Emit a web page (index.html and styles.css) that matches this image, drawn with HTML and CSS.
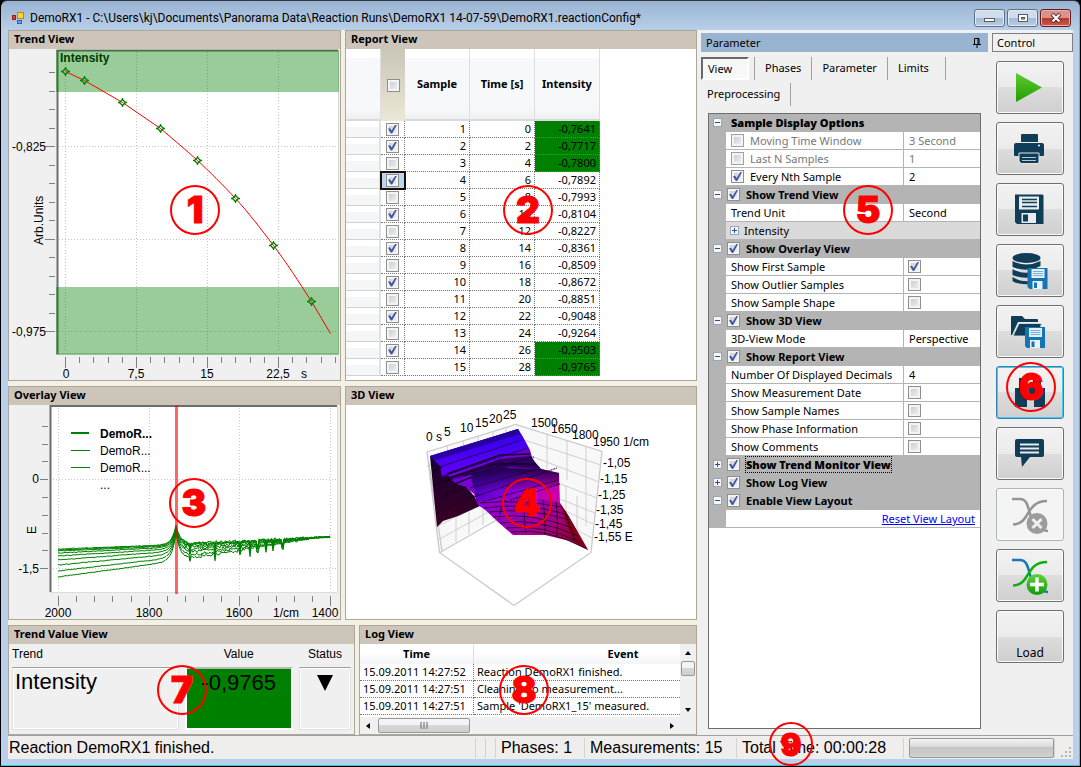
FILE: index.html
```html
<!DOCTYPE html>
<html lang="en">
<head>
<meta charset="utf-8">
<title>DemoRX1</title>
<link rel="stylesheet" href="styles.css">
</head>
<body>
<div class="window">
  <header class="titlebar">
    <svg class="app-icon" viewBox="11 11 14 14" width="14" height="14" aria-hidden="true">
      <rect x="17.5" y="12.5" width="6" height="6" fill="#ffd23c" stroke="#c08a00"/>
      <rect x="12.5" y="15.500" width="3" height="4" fill="#d8402a" stroke="#98200e"/>
      <rect x="17.500" y="20.500" width="4" height="3" fill="#6aa4f4" stroke="#2c62c8"/>
    </svg>
    <h1>DemoRX1 - C:\Users\kj\Documents\Panorama Data\Reaction Runs\DemoRX1 14-07-59\DemoRX1.reactionConfig*</h1>
    <div class="caption-buttons">
      <button class="cap" aria-label="Minimize"><svg viewBox="0 0 12 10" width="12" height="10"><rect x=".5" y="5.500" width="10" height="3" fill="#fff" stroke="#555c66"/></svg></button>
      <button class="cap" aria-label="Maximize"><svg viewBox="0 0 12 10" width="12" height="10"><rect x="1.500" y="1.500" width="9" height="7" fill="#fff" stroke="#555c66"/><rect x="4.500" y="4.500" width="3" height="1.500" fill="#8aa" stroke="#555c66"/></svg></button>
      <button class="cap close" aria-label="Close"><svg viewBox="0 0 12 10" width="12" height="10"><path d="M2 1l8 8M10 1L2 9" stroke="#5c2a26" stroke-width="4"/><path d="M2.500 1.500l7 7M9.500 1.500l-7 7" stroke="#fff" stroke-width="2.200"/></svg></button>
    </div>
  </header>

  <main class="workspace">
    <div class="views">
      <div class="view-row">
        <section class="panel">
          <h2>Trend View</h2>
          <svg class="chart" viewBox="9 49 331 331">
            <rect x="57" y="49" width="282" height="305" fill="#fff"/>
            <path d="M338.500 50V354M58 353.500H339" stroke="#d8d8d8" fill="none"/>
            <path d="M65.500 52V352M136.500 52V352M207.500 52V352M278.500 52V352M59 146.500H337M59 239.500H337M59 331.500H337" stroke="#c4c4c4" stroke-dasharray="1 2" fill="none"/>
            <path d="M57.500 354V50.500H338" stroke="#6c6c6c" stroke-width="2" fill="none"/>
            <path d="M56 50H339V92H56ZM56 287H339V355H56Z" fill="#008000" fill-opacity=".4"/>
            <path d="M49 72.500h6M49 91.500h6M49 109.500h6M49 128.500h6M45 146.500h10M49 165.500h6M49 183.500h6M49 202.500h6M49 220.500h6M45 239.500h10M49 257.500h6M49 276.500h6M49 294.500h6M49 313.500h6M45 331.500h10" stroke="#808080"/>
            <path d="M65.500 357v11M79.500 357v6M93.500 357v6M108.500 357v6M122.500 357v6M136.500 357v11M150.500 357v6M164.500 357v6M179.500 357v6M193.500 357v6M207.500 357v11M221.500 357v6M235.500 357v6M250.500 357v6M264.500 357v6M278.500 357v11M292.500 357v6M306.500 357v6M321.500 357v6M335.500 357v6" stroke="#808080"/>
            <path class="trend-line" d="M65.500 71.500L84.500 80.500 122.500 102.500 160.500 128.500C174 140 186 150 197.500 160.500S223 185 235.500 198.500 261 229 273.500 245.500 299 282 311.500 301.500L330.500 333.500"/>
            <g class="markers">
              <path d="M65.500 68.500l3 3-3 3-3-3zM84.500 77.500l3 3-3 3-3-3zM122.500 99.500l3 3-3 3-3-3zM160.500 125.500l3 3-3 3-3-3zM197.500 157.500l3 3-3 3-3-3zM235.500 195.500l3 3-3 3-3-3zM273.500 242.500l3 3-3 3-3-3zM311.500 298.500l3 3-3 3-3-3z"/>
              <path d="M65.500 67v2m0 5v2m-4.500 -4.500h2m5 0h2M84.500 76v2m0 5v2m-4.500 -4.500h2m5 0h2M122.500 98v2m0 5v2m-4.500 -4.500h2m5 0h2M160.500 124v2m0 5v2m-4.500 -4.500h2m5 0h2M197.500 156v2m0 5v2m-4.500 -4.500h2m5 0h2M235.500 194v2m0 5v2m-4.500 -4.500h2m5 0h2M273.500 241v2m0 5v2m-4.500 -4.500h2m5 0h2M311.500 297v2m0 5v2m-4.500 -4.500h2m5 0h2"/>
            </g>
            <text x="60" y="62" class="bold dark-green">Intensity</text>
            <text x="46" y="151" class="end">-0,825</text>
            <text x="46" y="336" class="end">-0,975</text>
            <text transform="translate(43 245) rotate(-90)">Arb.Units</text>
            <text x="66" y="378" class="mid">0</text><text x="136" y="378" class="mid">7,5</text><text x="207" y="378" class="mid">15</text><text x="278" y="378" class="mid">22,5</text><text x="301" y="378">s</text>
          </svg>
          <span class="callout c1">1</span>
        </section>

        <section class="panel">
          <h2>Report View</h2>
          <div class="report">
          <table>
            <thead><tr><th class="rowhead"></th><th class="check"><input type="checkbox" aria-label="Select all"></th><th>Sample</th><th>Time [s]</th><th>Intensity</th></tr></thead>
            <tbody>
            <tr><th></th><td class="check"><input type="checkbox" checked aria-label="Sample 1"></td><td>1</td><td>0</td><td class="hit">-0,7641</td></tr>
            <tr><th></th><td class="check"><input type="checkbox" checked aria-label="Sample 2"></td><td>2</td><td>2</td><td class="hit">-0,7717</td></tr>
            <tr><th></th><td class="check"><input type="checkbox" aria-label="Sample 3"></td><td>3</td><td>4</td><td class="hit">-0,7800</td></tr>
            <tr><th></th><td class="check current"><input type="checkbox" checked aria-label="Sample 4"></td><td>4</td><td>6</td><td>-0,7892</td></tr>
            <tr><th></th><td class="check"><input type="checkbox" aria-label="Sample 5"></td><td>5</td><td>8</td><td>-0,7993</td></tr>
            <tr><th></th><td class="check"><input type="checkbox" checked aria-label="Sample 6"></td><td>6</td><td>10</td><td>-0,8104</td></tr>
            <tr><th></th><td class="check"><input type="checkbox" aria-label="Sample 7"></td><td>7</td><td>12</td><td>-0,8227</td></tr>
            <tr><th></th><td class="check"><input type="checkbox" checked aria-label="Sample 8"></td><td>8</td><td>14</td><td>-0,8361</td></tr>
            <tr><th></th><td class="check"><input type="checkbox" aria-label="Sample 9"></td><td>9</td><td>16</td><td>-0,8509</td></tr>
            <tr><th></th><td class="check"><input type="checkbox" checked aria-label="Sample 10"></td><td>10</td><td>18</td><td>-0,8672</td></tr>
            <tr><th></th><td class="check"><input type="checkbox" aria-label="Sample 11"></td><td>11</td><td>20</td><td>-0,8851</td></tr>
            <tr><th></th><td class="check"><input type="checkbox" checked aria-label="Sample 12"></td><td>12</td><td>22</td><td>-0,9048</td></tr>
            <tr><th></th><td class="check"><input type="checkbox" aria-label="Sample 13"></td><td>13</td><td>24</td><td>-0,9264</td></tr>
            <tr><th></th><td class="check"><input type="checkbox" checked aria-label="Sample 14"></td><td>14</td><td>26</td><td class="hit">-0,9503</td></tr>
            <tr><th></th><td class="check"><input type="checkbox" aria-label="Sample 15"></td><td>15</td><td>28</td><td class="hit">-0,9765</td></tr>
            </tbody>
          </table>
          </div>
          <span class="callout c2">2</span>
        </section>
      </div>

      <div class="view-row">
        <section class="panel">
          <h2>Overlay View</h2>
          <svg class="chart" viewBox="9 405 331 214">
            <rect x="50" y="405" width="288" height="188" fill="#fff"/>
            <path d="M337.500 406V592.500H50" stroke="#dcdcdc" fill="none"/>
            <path d="M58.500 408V591M149.500 408V591M239.500 408V591M330.500 408V591M53 479.500H336M53 568.500H336" stroke="#c8c8c8" stroke-dasharray="1 2" fill="none"/>
            <path d="M50.500 592V406H337" stroke="#6c6c6c" stroke-width="2" fill="none"/>
            <path d="M42 426.500h6M42 444.500h6M42 461.500h6M40 479.500h8M42 497.500h6M42 515.500h6M42 533.500h6M42 550.500h6M40 568.500h8" stroke="#808080"/>
            <path d="M58.500 596v10M76.500 596v6M94.500 596v6M112.500 596v6M131.500 596v6M149.500 596v10M167.500 596v6M185.500 596v6M203.500 596v6M221.500 596v6M239.500 596v10M258.500 596v6M276.500 596v6M294.500 596v6M312.500 596v6M330.500 596v10" stroke="#808080"/>
            <g id="spectra"></g>
            <rect x="175" y="405" width="3" height="189" fill="#f00" fill-opacity=".6"/>
            <path d="M71 433h18" stroke="#008000" stroke-width="2"/>
            <path d="M71 450.500h19M71 467.500h19" stroke="#008000"/>
            <text x="100" y="438" class="bold">DemoR...</text><text x="100" y="455">DemoR...</text><text x="100" y="472">DemoR...</text><text x="100" y="489">...</text>
            <text x="39" y="483" class="end">0</text><text x="39" y="573" class="end">-1,5</text>
            <text transform="translate(36 534) rotate(-90)">E</text>
            <text x="58" y="617" class="mid">2000</text><text x="149" y="617" class="mid">1800</text><text x="239" y="617" class="mid">1600</text><text x="286" y="617" class="mid">1/cm</text><text x="325" y="617" class="mid">1400</text>
          </svg>
          <span class="callout c3">3</span>
        </section>

        <section class="panel">
          <h2>3D View</h2>
          <svg class="chart surface" viewBox="346 405 350 214">
            <defs>
              <linearGradient id="g-side" x1="0" y1="0" x2="0" y2="1"><stop offset="0" stop-color="#170030"/><stop offset="1" stop-color="#3c0024"/></linearGradient>
              <linearGradient id="g-ridge" x1="0" y1="0" x2=".25" y2="1"><stop offset="0" stop-color="#2400a0"/><stop offset=".4" stop-color="#3c00f0"/><stop offset="1" stop-color="#6a00f0"/></linearGradient>
              <linearGradient id="g-mid" x1="0" y1="0" x2="1" y2=".2"><stop offset="0" stop-color="#5a00e0"/><stop offset=".5" stop-color="#8400d8"/><stop offset="1" stop-color="#6000a8"/></linearGradient>
              <linearGradient id="g-hump" x1="0" y1=".3" x2="1" y2=".6"><stop offset="0" stop-color="#4200a4"/><stop offset=".35" stop-color="#7000d8"/><stop offset=".7" stop-color="#a400c8"/><stop offset="1" stop-color="#cc00a8"/></linearGradient>
              <linearGradient id="g-shade" x1="0" y1="0" x2="0" y2="1"><stop offset="0" stop-color="#100030" stop-opacity=".85"/><stop offset="1" stop-color="#100030" stop-opacity="0"/></linearGradient>
              <linearGradient id="g-front" x1="0" y1="0" x2="1" y2=".6"><stop offset="0" stop-color="#8c00dc"/><stop offset=".45" stop-color="#9800b4"/><stop offset=".75" stop-color="#a40078"/><stop offset="1" stop-color="#8c0020"/></linearGradient>
            </defs>
            <path d="M427 452L515.500 424.500 602 451.500 591 552.500 514 505 439.500 552.500Z" fill="#f8f8f8"/>
            <path d="M440 552.500L515 505 591 552.500 514 605.500Z" fill="#fff"/>
            <path d="M427 466L515 437 601 465M429 480L515 450 599 482M597 498L550 480M595 513L555 497M436 527L515 487 593 524M438 540L515 497 592 538M447 446l5 30M463 441l4 30M478 436v30M493 431v20M506 427v20M547 434v35M567 440v40M586 446v80M566 486V530M577 496V540M456 510v32M469 502v33M483 498v28M498 492v24" stroke="#d0d0d0" fill="none"/>
            <path d="M440 552.500L515 505 591 552.500 514 605.500Z" fill="#fff"/>
            <path d="M427 452L515.500 424.500 602 451.500 591 552.500 514 605.500 439.500 552.500ZM429 463l13 88M440 552.500L500 518" stroke="#cacaca" fill="none" stroke-width="1.300"/>
            <path d="M430 456L437 527 443 521 458 516 480 506 474 496 466 486 458 484 450 477 444 465Z" fill="url(#g-side)"/>
            <path d="M430 456L518 429 523 437 530 450 533 461 541 469 557 475 500 520 478 505 474 494 464 486 456 484 450 478 445 470 436 462Z" fill="url(#g-mid)"/>
            <path d="M430 456L518 429 523 438 529 449 442 477 440 466 434 460Z" fill="url(#g-ridge)"/>
            <path d="M430 456L518 429 520 434 433 461Z" fill="#200080" fill-opacity=".7"/>
            <path d="M446 478L500 459 531 456 535 462 541 469 510 467 470 475Z" fill="#300060"/>
            <path d="M450 478L494 464 536 464M447 474L500 455 530 454M455 484L474 476" stroke="#16002c" stroke-width="1.500" fill="none"/>
            <path d="M471 474L500 468 541 469 559 473 560 504 512 501 477 502Z" fill="url(#g-hump)"/>
            <path d="M471 474L500 468 541 469 559 473 559 486 472 492Z" fill="url(#g-shade)"/>
            <path d="M477 502L490 499 530 497 560 503 568 515 588 550 570 541 545 535 513 535 498 522Z" fill="url(#g-front)"/>
            <path d="M560 503L568 515 588 550 577 544 566 524Z" fill="#840018"/>
            <path d="M480 503Q520 499 562 507M484 508Q525 502 565 514M489 512Q528 507 569 520M493 517Q530 512 573 528M500 523Q536 517 578 536M506 528Q540 523 582 543M511 532Q545 527 585 548" stroke="#3c0044" stroke-width="1" fill="none"/>
            <path d="M436 468L522 440M440 477L527 448M446 481L534 457M470 488L537 469M474 497L557 468M482 502L558 480M510 500L560 484" stroke="#0c0030" stroke-dasharray="2 1" fill="none"/>
            <path d="M433 472L444 466M433 485L458 475M435 500L468 486M436 513L478 494" stroke="#08000c" stroke-dasharray="2 2" fill="none"/>
            <path d="M505 500q-5 8-6 20M525 499q-2 15 1 34M543 500q2 15 2 35M556 502q2 15 1 34M565 511q4 14 10 30" stroke="#14000c" stroke-dasharray="3 1" fill="none"/>
            <text x="426" y="441">0 s</text><text x="444" y="436">5</text><text x="460" y="432">10</text><text x="475" y="427">15</text><text x="489" y="423">20</text><text x="503" y="419">25</text>
            <text x="531" y="427">1500</text><text x="551" y="433">1650</text><text x="572" y="439">1800</text><text x="593" y="446">1950 1/cm</text>
            <text x="603" y="467">-1,05</text><text x="600" y="483">-1,15</text><text x="598" y="499">-1,25</text><text x="596" y="514">-1,35</text><text x="595" y="528">-1,45</text><text x="594" y="541">-1,55 E</text>
          </svg>
          <span class="callout c4">4</span>
        </section>
      </div>

      <div class="view-row lower">
        <section class="panel">
          <h2>Trend Value View</h2>
          <div class="trend-values">
            <span class="lbl">Trend</span><span class="lbl center">Value</span><span class="lbl center">Status</span>
            <div class="well">Intensity</div>
            <div class="well value">-0,9765</div>
            <div class="well status"><svg viewBox="0 0 16 16" width="16" height="16" role="img" aria-label="Falling"><path d="M0 0H16L8 16Z"/></svg></div>
          </div>
          <span class="callout c7">7</span>
        </section>
        <section class="panel">
          <h2>Log View</h2>
          <div class="log">
            <div class="log-scroll">
              <table>
                <thead><tr><th class="time">Time</th><th class="event">Event</th></tr></thead>
                <tbody>
                  <tr><td>15.09.2011 14:27:52</td><td>Reaction DemoRX1 finished.</td></tr>
                  <tr><td>15.09.2011 14:27:51</td><td>Cleaning no measurement...</td></tr>
                  <tr><td>15.09.2011 14:27:51</td><td>Sample 'DemoRX1_15' measured.</td></tr>
                </tbody>
              </table>
            </div>
            <div class="vbar"><svg viewBox="0 0 6 4" width="6" height="4"><path d="M3 0L6 4H0Z"/></svg><i class="thumb"></i><svg viewBox="0 0 6 4" width="6" height="4"><path d="M0 0H6L3 4Z"/></svg></div>
            <div class="hbar"><svg viewBox="0 0 4 6" width="4" height="6"><path d="M4 0V6L0 3Z"/></svg><i class="thumb"><svg viewBox="0 0 8 7" width="8" height="7"><path d="M1 0V7M4 0V7M7 0V7" stroke="#666"/></svg></i><svg class="right" viewBox="0 0 4 6" width="4" height="6"><path d="M0 0L4 3L0 6Z"/></svg></div>
          </div>
          <span class="callout c8">8</span>
        </section>
      </div>
    </div>

    <aside class="parameter">
      <h2 class="dock-title">Parameter
        <svg viewBox="0 0 8 10" width="8" height="10" aria-hidden="true"><path d="M1.500 6V.5H6V6M5 .5V6M0 6.500H8M4 7V10" fill="none" stroke="#000"/></svg>
      </h2>
      <nav class="tabs">
        <button class="active">View</button><button>Phases</button><button>Parameter</button><button class="wide">Limits</button><button>Preprocessing</button>
      </nav>
      <div class="props">
        <div class="cat"><button class="tog" aria-label="Collapse"></button><b>Sample Display Options</b></div>
        <div class="row off"><label><input type="checkbox" disabled>Moving Time Window</label><input type="text" value="3 Second" disabled aria-label="Moving time window value"></div>
        <div class="row off"><label><input type="checkbox" disabled>Last N Samples</label><input type="text" value="1" disabled aria-label="Last N samples value"></div>
        <div class="row"><label><input type="checkbox" checked>Every Nth Sample</label><input type="text" value="2" aria-label="Every Nth sample value"></div>
        <div class="cat"><button class="tog" aria-label="Collapse"></button><label><input type="checkbox" checked>Show Trend View</label></div>
        <div class="row"><label for="unit">Trend Unit</label><select id="unit"><option>Second</option></select></div>
        <div class="row sub"><button class="tog plus" aria-label="Expand"></button><span>Intensity</span></div>
        <div class="cat"><button class="tog" aria-label="Collapse"></button><label><input type="checkbox" checked>Show Overlay View</label></div>
        <div class="row"><label for="p1">Show First Sample</label><span><input type="checkbox" id="p1" checked></span></div>
        <div class="row"><label for="p2">Show Outlier Samples</label><span><input type="checkbox" id="p2"></span></div>
        <div class="row"><label for="p3">Show Sample Shape</label><span><input type="checkbox" id="p3"></span></div>
        <div class="cat"><button class="tog" aria-label="Collapse"></button><label><input type="checkbox" checked>Show 3D View</label></div>
        <div class="row"><label for="mode">3D-View Mode</label><select id="mode"><option>Perspective</option></select></div>
        <div class="cat"><button class="tog" aria-label="Collapse"></button><label><input type="checkbox" checked>Show Report View</label></div>
        <div class="row"><label for="dec">Number Of Displayed Decimals</label><input type="text" id="dec" value="4"></div>
        <div class="row"><label for="p4">Show Measurement Date</label><span><input type="checkbox" id="p4"></span></div>
        <div class="row"><label for="p5">Show Sample Names</label><span><input type="checkbox" id="p5"></span></div>
        <div class="row"><label for="p6">Show Phase Information</label><span><input type="checkbox" id="p6"></span></div>
        <div class="row"><label for="p7">Show Comments</label><span><input type="checkbox" id="p7"></span></div>
        <div class="cat"><button class="tog plus" aria-label="Expand"></button><label class="focus"><input type="checkbox" checked><b>Show Trend Monitor View</b></label></div>
        <div class="cat"><button class="tog plus" aria-label="Expand"></button><label><input type="checkbox" checked>Show Log View</label></div>
        <div class="cat"><button class="tog" aria-label="Collapse"></button><label><input type="checkbox" checked>Enable View Layout</label></div>
        <div class="row link"><a href="#">Reset View Layout</a></div>
      </div>
      <span class="callout c5">5</span>
    </aside>

    <aside class="control">
      <h2>Control</h2>
      <svg width="0" height="0" class="defs" aria-hidden="true">
        <defs>
          <linearGradient id="g-play" x1="0" y1="0" x2="0" y2="1"><stop offset="0" stop-color="#62c832"/><stop offset="1" stop-color="#1ea000"/></linearGradient>
          <linearGradient id="g-add" x1="0" y1="0" x2="0" y2="1"><stop offset="0" stop-color="#5cd43a"/><stop offset="1" stop-color="#109a08"/></linearGradient>
          <g id="disk">
            <path d="M0 0H20V21H2L0 19Z" fill="#1474b4"/>
            <path d="M4 1H17V10H4Z" fill="#e6f1f8"/><path d="M5.500 3.500H15.500M5.500 5.500H15.500M5.500 7.500H15.500" stroke="#7ab0d4"/>
            <path d="M5 13H15V21H5Z" fill="#e6f1f8"/><path d="M6.500 14.500H9.500V20H6.500Z" fill="#1474b4"/>
          </g>
        </defs>
      </svg>
      <button aria-label="Start"><svg viewBox="1010 68 40 40"><path d="M1016 73L1042 87.500 1016 102Z" fill="url(#g-play)"/></svg></button>
      <button aria-label="Print"><svg viewBox="1010 129 40 40"><g fill="#0f3d58"><path d="M1022 134H1037Q1038 134 1038 135V142H1021V135Q1021 134 1022 134Z"/><path d="M1016 143H1042Q1044 143 1044 145V155Q1044 156 1043 156H1015Q1014 156 1014 155V145Q1014 143 1016 143Z"/></g><circle cx="1039" cy="145.500" r="1" fill="#fff"/><path d="M1019 153H1039V162Q1039 163.500 1037 163.500H1021L1019 161Z" fill="#0f3d58" stroke="#e4e4e4"/><path d="M1022 157.500H1036M1022 160.500H1036" stroke="#b8c6ce"/></svg></button>
      <button aria-label="Save"><svg viewBox="1010 190 40 40"><path d="M1015 194.500H1042.500Q1043.500 194.500 1043.500 196V224H1017L1015 222Z" fill="#0f3d58"/><path d="M1019 196.500H1039V209.500H1019Z" fill="#e8ecee"/><path d="M1022 199.500H1037M1022 202.500H1037M1022 206.500H1037" stroke="#0f3d58" stroke-width="1.500"/><path d="M1021.500 213H1036V223H1021.500Z" fill="#e8ecee"/><path d="M1023 214.500H1028V221.500H1023Z" fill="#0f3d58"/></svg></button>
      <button aria-label="Save to database"><svg viewBox="1010 251 40 40"><g fill="#0f3d58"><ellipse cx="1026.500" cy="258" rx="14" ry="5"/><path d="M1012.500 261Q1026 268 1040.500 261V266Q1026 273 1012.500 267Z"/><path d="M1012.500 269Q1026 277 1040.500 268V274Q1026 281 1012.500 275Z"/><path d="M1012.500 277Q1020 282 1030 281V284Q1018 285 1012.500 281Z"/></g><use href="#disk" x="1027.500" y="268"/></svg></button>
      <button aria-label="Save to folder"><svg viewBox="1010 312 40 40"><path d="M1011 335V317Q1011 316 1012 316H1022L1025 319H1037Q1038 319 1038 320V322H1018L1012 335Z" fill="#0f3d58"/><path d="M1019 323.500H1041.500L1038 336H1013Z" fill="#0f3d58" stroke="#e4e4e4" stroke-width=".8"/><use href="#disk" x="1025" y="327"/></svg></button>
      <button class="selected" aria-label="Search"><svg viewBox="1010 373 40 40"><path d="M1019 378H1027V385H1033V378H1041V388H1045V407H1034V396H1027V407H1015V388H1019Z" fill="#0f3d58"/></svg></button>
      <button aria-label="Comment"><svg viewBox="1010 434 40 40"><path d="M1017 439H1042Q1044 439 1044 441V455Q1044 457 1042 457H1030L1022 467 1021 457H1017Q1015 457 1015 455V441Q1015 439 1017 439Z" fill="#0f3d58"/><path d="M1020 444.500H1039M1020 448.500H1039M1020 452.500H1039" stroke="#e8ecee" stroke-width="1.800"/></svg></button>
      <button disabled aria-label="Remove curve"><svg viewBox="1010 495 40 40"><g fill="none" stroke="#949494" stroke-width="2.500"><path d="M1012 499H1020C1034 499 1024 530 1048 531"/><path d="M1013 524.500C1031 524 1025 501 1047 501"/></g><circle cx="1037" cy="523.500" r="10.500" fill="#9c9c9c"/><path d="M1032.500 519l9 9M1041.500 519l-9 9" stroke="#eee" stroke-width="3"/></svg></button>
      <button aria-label="Add curve"><svg viewBox="1010 556 40 40"><path d="M1012 560H1020C1034 560 1024 591 1048 592" fill="none" stroke="#1a78b8" stroke-width="2.500"/><path d="M1013 585.500C1031 585 1025 562 1047 562" fill="none" stroke="#10b010" stroke-width="2.500"/><circle cx="1037" cy="584.500" r="10.500" fill="url(#g-add)"/><path d="M1030 584.500h14M1037 577.500v14" stroke="#fff" stroke-width="3.500"/></svg></button>
      <button class="text">Load</button>
      <span class="callout c6">6</span>
    </aside>
  </main>

  <footer class="status-bar">
    <span class="msg">Reaction DemoRX1 finished.</span><span class="gap"></span><span class="gap"></span>
    <span class="phases">Phases: 1</span><span class="meas">Measurements: 15</span><span class="total">Total Time: 00:00:28</span>
    <span class="prog"><progress value="0" max="100" aria-label="Progress"></progress></span>
    <svg class="grip" viewBox="0 0 10 10" width="10" height="10" aria-hidden="true"><path d="M8 0h2v2h-2zM4 4h2v2h-2zM8 4h2v2h-2zM0 8h2v2h-2zM4 8h2v2h-2zM8 8h2v2h-2z" fill="#bcb8b8"/></svg>
    <span class="callout c9">9</span>
  </footer>
</div>
<script src="spectra.js"></script>
</body>
</html>
```

FILE: spectra.js
```js
// Draws the family of overlaid spectra, one path per sample.
(function () {
  var group = document.getElementById('spectra');
  var seed = 7;
  function rnd() {
    seed = (seed * 1103515245 + 12345) % 2147483648;
    return seed / 2147483648;
  }
  var dips = [190, 215, 240, 250, 257, 258, 266, 273, 282, 283];
  var starts = [549, 550, 551, 553, 556, 560, 565, 571, 577];
  starts.forEach(function (start, i) {
    var t = i / (starts.length - 1);
    var spread = (start - 549) / 28;
    var d = '';
    for (var x = 58; x <= 330; x += 1) {
      var y;
      if (x < 176) {
        y = start + (545 + spread * 17 - start) * (x - 58) / 110;
      } else {
        var u = Math.max(0, (x - 190) / 140);
        y = 543 + spread * 15 * Math.max(0, 1 - u * 1.15) - 6 * u;
        if (x > 184 && x < 310) {
          y += (rnd() - 0.3) * 2;
          if (dips.indexOf(x) >= 0) { y += 3 + 4 * rnd(); }
        }
        y += (rnd() - 0.5) * 1.5;
      }
      y += (rnd() - 0.5) * 0.8;
      var peak = Math.exp(-Math.abs(x - 176) / 4);
      y -= peak * (y - 525 - t * 8);
      d += (d ? 'L' : 'M') + x + ' ' + y.toFixed(1);
    }
    var path = document.createElementNS('http://www.w3.org/2000/svg', 'path');
    path.setAttribute('d', d);
    path.setAttribute('class', 'spectrum');
    group.appendChild(path);
  });
})();
```

FILE: styles.css
```css
* { box-sizing: border-box; }

:root {
  --ui: "Noto Sans", "Open Sans", sans-serif;
  --arial: "Liberation Sans", Arial, sans-serif;
  --edge: #aca899;
  --face: #f0f0f0;
}

body {
  margin: 0;
  background: #000;
  font: 11px/16px var(--ui);
  color: #000;
}

h1, h2 { margin: 0; font-size: inherit; }
button, input, select { font: inherit; color: inherit; }

.window {
  display: flex;
  flex-direction: column;
  min-height: 100vh;
  padding: 0 7px 7px;
  border: 1px solid #000;
  border-top-color: #30363c;
  border-radius: 7px 7px 0 0;
  background: linear-gradient(#98b3d1, #bad0ea 30px);
  box-shadow: inset -1px -1px 0 #35c6e2;
}

.titlebar {
  display: flex;
  align-items: center;
  gap: 5px;
  height: 29px;
  padding: 4px 2px 0 3px;
}
.titlebar h1 {
  flex: 1;
  min-width: 0;
  overflow: hidden;
  white-space: nowrap;
  font-family: Roboto, var(--ui);
  font-size: 12px;
  font-weight: 400;
}
.caption-buttons { display: flex; gap: 2px; }
.cap {
  display: grid;
  place-items: center;
  width: 31px;
  height: 18px;
  padding: 0;
  border: 1px solid #5f7084;
  border-radius: 3px;
  background: linear-gradient(#cfdcec 50%, #a5bad4 50%, #bccde2);
  box-shadow: inset 0 0 0 1px #e0eaf5;
}
.cap.close {
  border-color: #5c1e22;
  background: linear-gradient(#dc9088 50%, #b8342a 50%, #cc5a4c);
  box-shadow: inset 0 0 0 1px #e8b0aa;
}

.workspace {
  flex: 1;
  display: grid;
  grid-template-columns: minmax(0, 1fr) 287px 81px;
  gap: 4px;
  background: var(--face);
}

/* left side: six views */
.views {
  display: flex;
  flex-direction: column;
  gap: 5px;
  background: #f4f0e6;
}
.view-row {
  display: grid;
  grid-template-columns: minmax(0, 333fr) minmax(0, 352fr);
  gap: 4px;
}
.view-row.lower { flex: 1; grid-template-columns: minmax(0, 347fr) minmax(0, 338fr); }
.panel {
  position: relative;
  display: flex;
  flex-direction: column;
  border: 1px solid var(--edge);
  background: var(--face);
}
.panel h2 {
  height: 18px;
  padding-left: 5px;
  background: #cdc5ba;
  line-height: 16px;
}

.chart { display: block; width: 100%; height: auto; font: 12px var(--arial); }
.chart.surface { background: #fff; }
.chart .bold { font-weight: 700; }
.chart .dark-green { fill: #003c00; }
.chart .end { text-anchor: end; }
.chart .mid { text-anchor: middle; }
.trend-line { fill: none; stroke: #f00; }
.markers path { fill: none; stroke: #008000; stroke-width: 1.3; }
.spectrum { fill: none; stroke: #008000; }

/* check boxes */
input[type="checkbox"] {
  appearance: none;
  position: relative;
  flex: none;
  width: 13px;
  height: 13px;
  margin: 0;
  border: 1px solid #8e8f8f;
  background: linear-gradient(135deg, #c4c9d0, #f4f4f4);
  box-shadow: inset 0 0 0 2px #f4f4f4;
}
input[type="checkbox"]:checked::before {
  content: "";
  position: absolute;
  inset: 1px;
  background: #42569c;
  clip-path: polygon(0 48%, 22% 42%, 40% 66%, 82% 0, 100% 4%, 46% 100%, 32% 100%);
}
input[type="checkbox"]:disabled { border-color: #a0a0a0; }

/* report table */
.report { flex: 1; background: #fff; }
table { border-collapse: separate; border-spacing: 0; table-layout: fixed; }
.report table { width: 254px; }
.report th, .report td { height: 17px; padding: 0; line-height: 16px; }
.report thead th {
  width: 65px;
  height: 72px;
  border-right: 1px solid #dcdfe2;
  border-bottom: 2px solid #d8dadc;
  background: linear-gradient(#fff 9px, #f6f8fa 9px, #f6f8fa 60px, #eef0f2);
}
.report thead .rowhead { width: 35px; }
.report thead .check {
  width: 24px;
  border: 0;
  background: linear-gradient(#cac6b8, #ece8d6);
}
.report tbody th {
  border-right: 2px solid #e0e2e4;
  border-bottom: 1px solid #d0d2d4;
  background: linear-gradient(#fff 35%, #f4f6f8 35%);
}
.report td {
  padding-right: 3px;
  border-right: 1px dotted #777;
  border-bottom: 1px dotted #777;
  text-align: right;
}
.report .check { padding: 0; text-align: center; }
.report .check input { display: block; margin: 0 auto; }
.report td.hit { background: #008000; }
.report td.current { outline: 2px solid #1a1008; outline-offset: -1px; background: #bcd6f2; }

/* trend values */
.trend-values {
  flex: 1;
  display: grid;
  grid-template-columns: 166fr 108fr 52fr;
  grid-template-rows: 23px 1fr;
  column-gap: 6px;
  padding: 0 3px 4px;
  font-family: var(--arial);
}
.lbl { font-size: 12px; line-height: 21px; }
.lbl.center { text-align: center; }
.well {
  padding-left: 2px;
  border: 1px solid #e0e0e4;
  border-top-color: #a0a0a0;
  box-shadow: inset 0 0 0 1px #fff;
  font-size: 22px;
  line-height: 28px;
}
.well.value { padding: 0; border-width: 2px; border-color: #b8b8b8 #fff #fff; background: #008000; background-clip: padding-box; box-shadow: none; text-align: center; }
.well.status { padding: 7px 0 0; text-align: center; line-height: 16px; }

/* log */
.log {
  flex: 1;
  display: grid;
  grid-template-columns: minmax(0, 1fr) 16px;
  grid-template-rows: 1fr 17px;
  background: var(--face);
}
.log-scroll { overflow: hidden; background: #fff; }
.log table { width: 100%; }
.log th { height: 20px; padding: 0; border-right: 1px solid #dcdfe2; background: linear-gradient(#fff 40%, #f2f4f6); }
.log .time { width: 114px; }
.log .event { padding-left: 92px; border: 0; }
.log td { height: 17px; padding: 0 0 0 3px; border-right: 1px dotted #777; border-bottom: 1px dotted #777; line-height: 16px; white-space: nowrap; }
.log td:last-child { border-right: 0; }
.vbar { display: flex; flex-direction: column; align-items: center; gap: 6px; padding: 7px 0 5px; }
.vbar svg:last-child { margin-top: auto; }
.vbar .thumb { width: 14px; height: 15px; }
.thumb { display: grid; place-items: center; border: 1px solid #989898; border-radius: 2px; background: linear-gradient(#f4f4f4 45%, #d8d8d8 50%, #cfcfcf); }
.hbar { display: flex; align-items: center; gap: 8px; padding: 0 6px; }
.hbar .thumb { width: 92px; height: 15px; }
.hbar .right { margin-left: auto; }

/* parameter dock */
.parameter, .control { position: relative; padding-top: 3px; }
.dock-title {
  display: flex;
  align-items: center;
  justify-content: space-between;
  height: 19px;
  padding: 0 7px 0 5px;
  background: #99b4d1;
  font-weight: 400;
}
.tabs { display: flex; flex-wrap: wrap; row-gap: 3px; margin: 5px 0 7px; }
.tabs button {
  height: 23px;
  padding: 0 10px 1px;
  border: 0;
  border-right: 1px solid #a0a0a0;
  background: none;
}
.tabs .active {
  width: 48px;
  margin-right: 6px;
  padding: 0 5px;
  border: 2px solid;
  border-color: #696969 #fff #fff #696969;
  background: #f8f8f8;
  text-align: left;
}
.tabs .active + button { box-shadow: -1px 0 0 #a0a0a0; }
.tabs .wide { padding-right: 16px; }
.tabs button:last-child { padding-left: 6px; }

.props {
  margin: 0 7px;
  min-height: 616px;
  border: 1px solid #6e6e6e;
  background: #fff;
  line-height: 17px;
}
.cat, .row { height: 18px; }
.cat {
  display: flex;
  align-items: center;
  padding-bottom: 1px;
  background: #b4b4b4;
  font-weight: 700;
}
.cat > b { padding-left: 9px; }
.cat label { display: flex; align-items: center; gap: 6px; padding-left: 5px; }
.cat .tog { margin-left: 4px; }
.tog {
  flex: none;
  width: 9px;
  height: 9px;
  padding: 0;
  border: 1px solid #98a4b8;
  background: linear-gradient(#2c4ca0, #2c4ca0) center / 5px 1px no-repeat, #f6f6f6;
}
.tog.plus {
  background: linear-gradient(#2c4ca0, #2c4ca0) center / 5px 1px no-repeat,
    linear-gradient(#2c4ca0, #2c4ca0) center / 1px 5px no-repeat, #f6f6f6;
}
.focus b { line-height: 15px; outline: 1px dotted #000; }
.row {
  display: grid;
  grid-template-columns: minmax(0, 1fr) 77px;
  border-left: 17px solid #b4b4b4;
  border-bottom: 1px solid #b4b4b4;
}
.row > label { display: flex; align-items: center; gap: 6px; padding-left: 5px; white-space: nowrap; }
.row > span, .row > input, .row > select {
  min-width: 0;
  height: 17px;
  margin: 0;
  padding: 0 0 0 5px;
  border: 0;
  border-left: 1px solid #b4b4b4;
  border-radius: 0;
  background: #fff;
  appearance: none;
}
.row > span { display: flex; align-items: center; padding-left: 4px; }
.row.off { color: #787878; }
.row.sub { display: flex; align-items: center; gap: 5px; padding-left: 4px; background: #dadada; }
.row.sub > span { padding: 0; border: 0; background: none; }
.row.link { display: block; padding-right: 5px; text-align: right; }
.row a { color: #00f; }

/* control dock */
.control { display: flex; flex-direction: column; align-items: flex-start; gap: 8px; }
.control h2 {
  width: 100%;
  height: 19px;
  margin-bottom: 1px;
  padding-left: 4px;
  border: 1px solid #808080;
  font-weight: 400;
  line-height: 17px;
}
.control .defs { position: absolute; }
.control button {
  display: grid;
  place-items: center;
  width: 68px;
  height: 53px;
  margin-left: 4px;
  padding: 0;
  border: 1px solid #707070;
  border-radius: 3px;
  background: linear-gradient(#f2f2f2, #ebebeb 50%, #dddddd 50%, #cfcfcf);
  box-shadow: inset 0 0 0 1px #fafafa;
}
.control button svg { width: 40px; height: 40px; }
.control button.selected { border-color: #3c7fb1; box-shadow: inset 0 0 0 1px #48c8f0; }
.control button:disabled { border-color: #adb2b5; background: #f4f4f4; }
.control button.text { align-items: end; padding-bottom: 1px; font-size: 12px; }

/* status bar */
.status-bar {
  position: relative;
  display: flex;
  align-items: center;
  height: 24px;
  border-top: 1px solid #a0a0a0;
  background: #f0eded;
  font: 16px/22px var(--arial);
  white-space: nowrap;
}
.status-bar > span:not(.callout) { height: 20px; padding-left: 5px; border-right: 1px solid #d6d2d2; line-height: 20px; }
.status-bar > .msg:not(.callout) { flex: 1; padding-left: 1px; }
.gap { width: 10px; }
.phases { width: 89px; }
.meas { width: 152px; }
.total { width: 167px; }
.status-bar .prog { width: 151px; }
.prog progress {
  display: block;
  width: 145px;
  height: 20px;
  appearance: none;
  border: 1px solid #989898;
  border-radius: 2px;
  background: linear-gradient(#f4f4f4, #d8d8d8 45%, #c4c4c4 46%, #d2d2d2);
}
.prog progress::-webkit-progress-bar { background: none; }
.grip { margin: 8px 2px 0 6px; }

/* numbered callouts over the views */
.callout {
  position: absolute;
  z-index: 2;
  width: 50px;
  height: 50px;
  border: 2px solid #f00;
  border-radius: 50%;
  color: #f00;
  font: 900 37px/46px "Inter", var(--arial);
  -webkit-text-stroke: 1px #f00;
  text-align: center;
}
.c1 { left: 161px; top: 154px; }
.c2 { left: 157px; top: 154px; }
.c3 { left: 160px; top: 91px; }
.c4 { left: 156px; top: 91px; }
.c5 { left: 142px; top: 155px; }
.c6 { left: 14px; top: 332px; }
.c7 { left: 148px; top: 39px; }
.c8 { left: 139px; top: 39px; }
.c9 { right: 260px; top: -14px; width: 44px; height: 44px; font-size: 31px; line-height: 41px; }
```
